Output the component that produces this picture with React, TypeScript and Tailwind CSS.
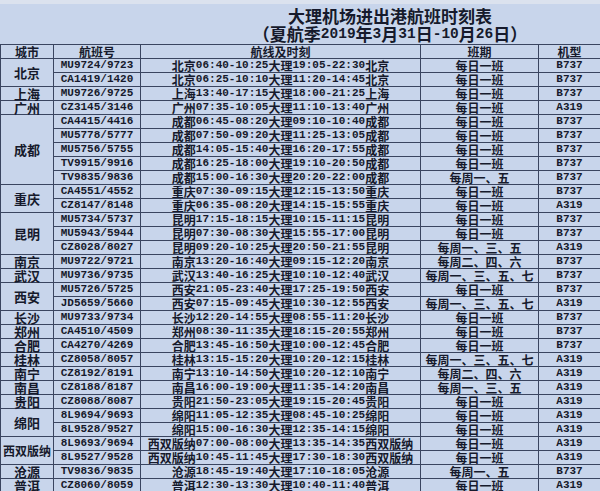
import React from 'react'

type Row = [string, string, string, string]
type Group = { city: string; rows: Row[] }

const groups: Group[] = [
  { city: '北京', rows: [
    ['MU9724/9723', '北京06:40-10:25大理19:05-22:30北京', '每日一班', 'B737'],
    ['CA1419/1420', '北京06:25-10:10大理11:20-14:45北京', '每日一班', 'B737'],
  ] },
  { city: '上海', rows: [['MU9726/9725', '上海13:40-17:15大理18:00-21:25上海', '每日一班', 'B737']] },
  { city: '广州', rows: [['CZ3145/3146', '广州07:35-10:05大理11:10-13:40广州', '每日一班', 'A319']] },
  { city: '成都', rows: [
    ['CA4415/4416', '成都06:45-08:20大理09:10-10:40成都', '每日一班', 'B737'],
    ['MU5778/5777', '成都07:50-09:20大理11:25-13:05成都', '每日一班', 'B737'],
    ['MU5756/5755', '成都14:05-15:40大理16:20-17:55成都', '每日一班', 'B737'],
    ['TV9915/9916', '成都16:25-18:00大理19:10-20:50成都', '每日一班', 'B737'],
    ['TV9835/9836', '成都15:00-16:30大理20:20-22:00成都', '每周一、五', 'B737'],
  ] },
  { city: '重庆', rows: [
    ['CA4551/4552', '重庆07:30-09:15大理12:15-13:50重庆', '每日一班', 'B737'],
    ['CZ8147/8148', '重庆06:35-08:20大理14:15-15:55重庆', '每日一班', 'A319'],
  ] },
  { city: '昆明', rows: [
    ['MU5734/5737', '昆明17:15-18:15大理10:15-11:15昆明', '每日一班', 'B737'],
    ['MU5943/5944', '昆明07:30-08:30大理15:55-17:00昆明', '每日一班', 'B737'],
    ['CZ8028/8027', '昆明09:20-10:25大理20:50-21:55昆明', '每周一、三、五', 'A319'],
  ] },
  { city: '南京', rows: [['MU9722/9721', '南京13:20-16:40大理09:15-12:20南京', '每周二、四、六', 'B737']] },
  { city: '武汉', rows: [['MU9736/9735', '武汉13:40-16:25大理10:10-12:40武汉', '每周一、三、五、七', 'B737']] },
  { city: '西安', rows: [
    ['MU5726/5725', '西安21:05-23:40大理17:25-19:50西安', '每日一班', 'B737'],
    ['JD5659/5660', '西安07:15-09:45大理10:30-12:55西安', '每周一、三、五、七', 'A319'],
  ] },
  { city: '长沙', rows: [['MU9733/9734', '长沙12:20-14:55大理08:55-11:20长沙', '每日一班', 'B737']] },
  { city: '郑州', rows: [['CA4510/4509', '郑州08:30-11:35大理18:15-20:55郑州', '每日一班', 'B737']] },
  { city: '合肥', rows: [['CA4270/4269', '合肥13:45-16:50大理10:00-12:45合肥', '每日一班', 'B737']] },
  { city: '桂林', rows: [['CZ8058/8057', '桂林13:15-15:20大理10:20-12:15桂林', '每周一、三、五、七', 'A319']] },
  { city: '南宁', rows: [['CZ8192/8191', '南宁13:10-14:50大理10:20-12:10南宁', '每周二、四、六', 'A319']] },
  { city: '南昌', rows: [['CZ8188/8187', '南昌16:00-19:00大理11:35-14:20南昌', '每周一、三、五', 'A319']] },
  { city: '贵阳', rows: [['CZ8088/8087', '贵阳21:50-23:05大理19:15-20:45贵阳', '每日一班', 'A319']] },
  { city: '绵阳', rows: [
    ['8L9694/9693', '绵阳11:05-12:35大理08:45-10:25绵阳', '每日一班', 'A319'],
    ['8L9528/9527', '绵阳15:00-16:30大理12:35-14:15绵阳', '每日一班', 'A319'],
  ] },
  { city: '西双版纳', rows: [
    ['8L9693/9694', '西双版纳07:00-08:00大理13:35-14:35西双版纳', '每日一班', 'A319'],
    ['8L9527/9528', '西双版纳10:45-11:45大理17:30-18:30西双版纳', '每日一班', 'A319'],
  ] },
  { city: '沧源', rows: [['TV9836/9835', '沧源18:45-19:40大理17:10-18:05沧源', '每周一、五', 'B737']] },
  { city: '普洱', rows: [['CZ8060/8059', '普洱12:30-13:30大理10:40-11:40普洱', '每日一班', 'A319']] },
]

const CJK = /[\u3000-\u303f\u4e00-\u9fff\uff00-\uffef]/

// split into CJK / latin runs so each gets its own font and size
function Mixed({ text, cjk, latin, box }: { text: string; cjk: string; latin: string; box: string }) {
  const parts = text.split(/([\u3000-\u303f\u4e00-\u9fff\uff00-\uffef]+)/).filter(Boolean)
  return (
    <div className={box}>
      {parts.map((p, i) =>
        CJK.test(p)
          ? <span key={i} className={cjk}>{p}</span>
          : <span key={i} className={latin}>{p}</span>
      )}
    </div>
  )
}

const cell = 'border border-[#3a4560] p-0 text-center align-middle whitespace-nowrap'
const cjkFont = "font-bold font-['Noto_Sans_CJK_SC',sans-serif]"
const cjkBody = "text-[12px] leading-[13px] font-bold font-['Noto_Sans_CJK_SC',sans-serif]"
const monoBody = "text-[11px] leading-[13px] font-bold font-['Liberation_Mono',monospace]"

export default function App() {
  return (
    <div className="w-[600px] h-[491px] overflow-hidden bg-[#c8d5eb] text-[#161a2c]">
      <div className="h-[4px] bg-[#dbe2ee]" />
      <div className="h-[40px] pl-[180px] flex flex-col items-center">
        <div className={`${cjkFont} text-[17px] leading-[19px] pt-[2px]`}>大理机场进出港航班时刻表</div>
        <Mixed
          box="flex h-[18px] items-center"
          text="（夏航季2019年3月31日-10月26日）"
          cjk="text-[17px] leading-[18px] font-bold font-['Noto_Sans_CJK_SC',sans-serif]"
          latin="text-[14.5px] leading-[18px] font-bold font-['Liberation_Mono',monospace]"
        />
      </div>
      <table className="w-[600px] table-fixed border-collapse text-[12px] leading-[13px]">
        <colgroup>
          <col className="w-[53px]" />
          <col className="w-[87px]" />
          <col className="w-[280px]" />
          <col className="w-[118px]" />
          <col className="w-[62px]" />
        </colgroup>
        <thead>
          <tr className={`h-[14px] ${cjkFont}`}>
            <th className={cell}>城市</th>
            <th className={cell}>航班号</th>
            <th className={cell}>航线及时刻</th>
            <th className={cell}>班期</th>
            <th className={cell}>机型</th>
          </tr>
        </thead>
        <tbody>
          {groups.map(g =>
            g.rows.map((r, i) => (
              <tr key={r[0]} className="h-[14px]">
                {i === 0 && (
                  <td
                    rowSpan={g.rows.length}
                    className={`${cell} ${cjkFont} ${g.city.length > 2 ? 'text-[12px]' : 'text-[13px]'}`}
                  >
                    {g.city}
                  </td>
                )}
                <td className={`${cell} ${monoBody}`}>{r[0]}</td>
                <td className={cell}>
                  <Mixed box="flex h-[13px] items-center justify-center" text={r[1]} cjk={cjkBody} latin={monoBody} />
                </td>
                <td className={`${cell} ${cjkBody}`}>{r[2]}</td>
                <td className={`${cell} ${monoBody}`}>{r[3]}</td>
              </tr>
            ))
          )}
        </tbody>
      </table>
    </div>
  )
}
